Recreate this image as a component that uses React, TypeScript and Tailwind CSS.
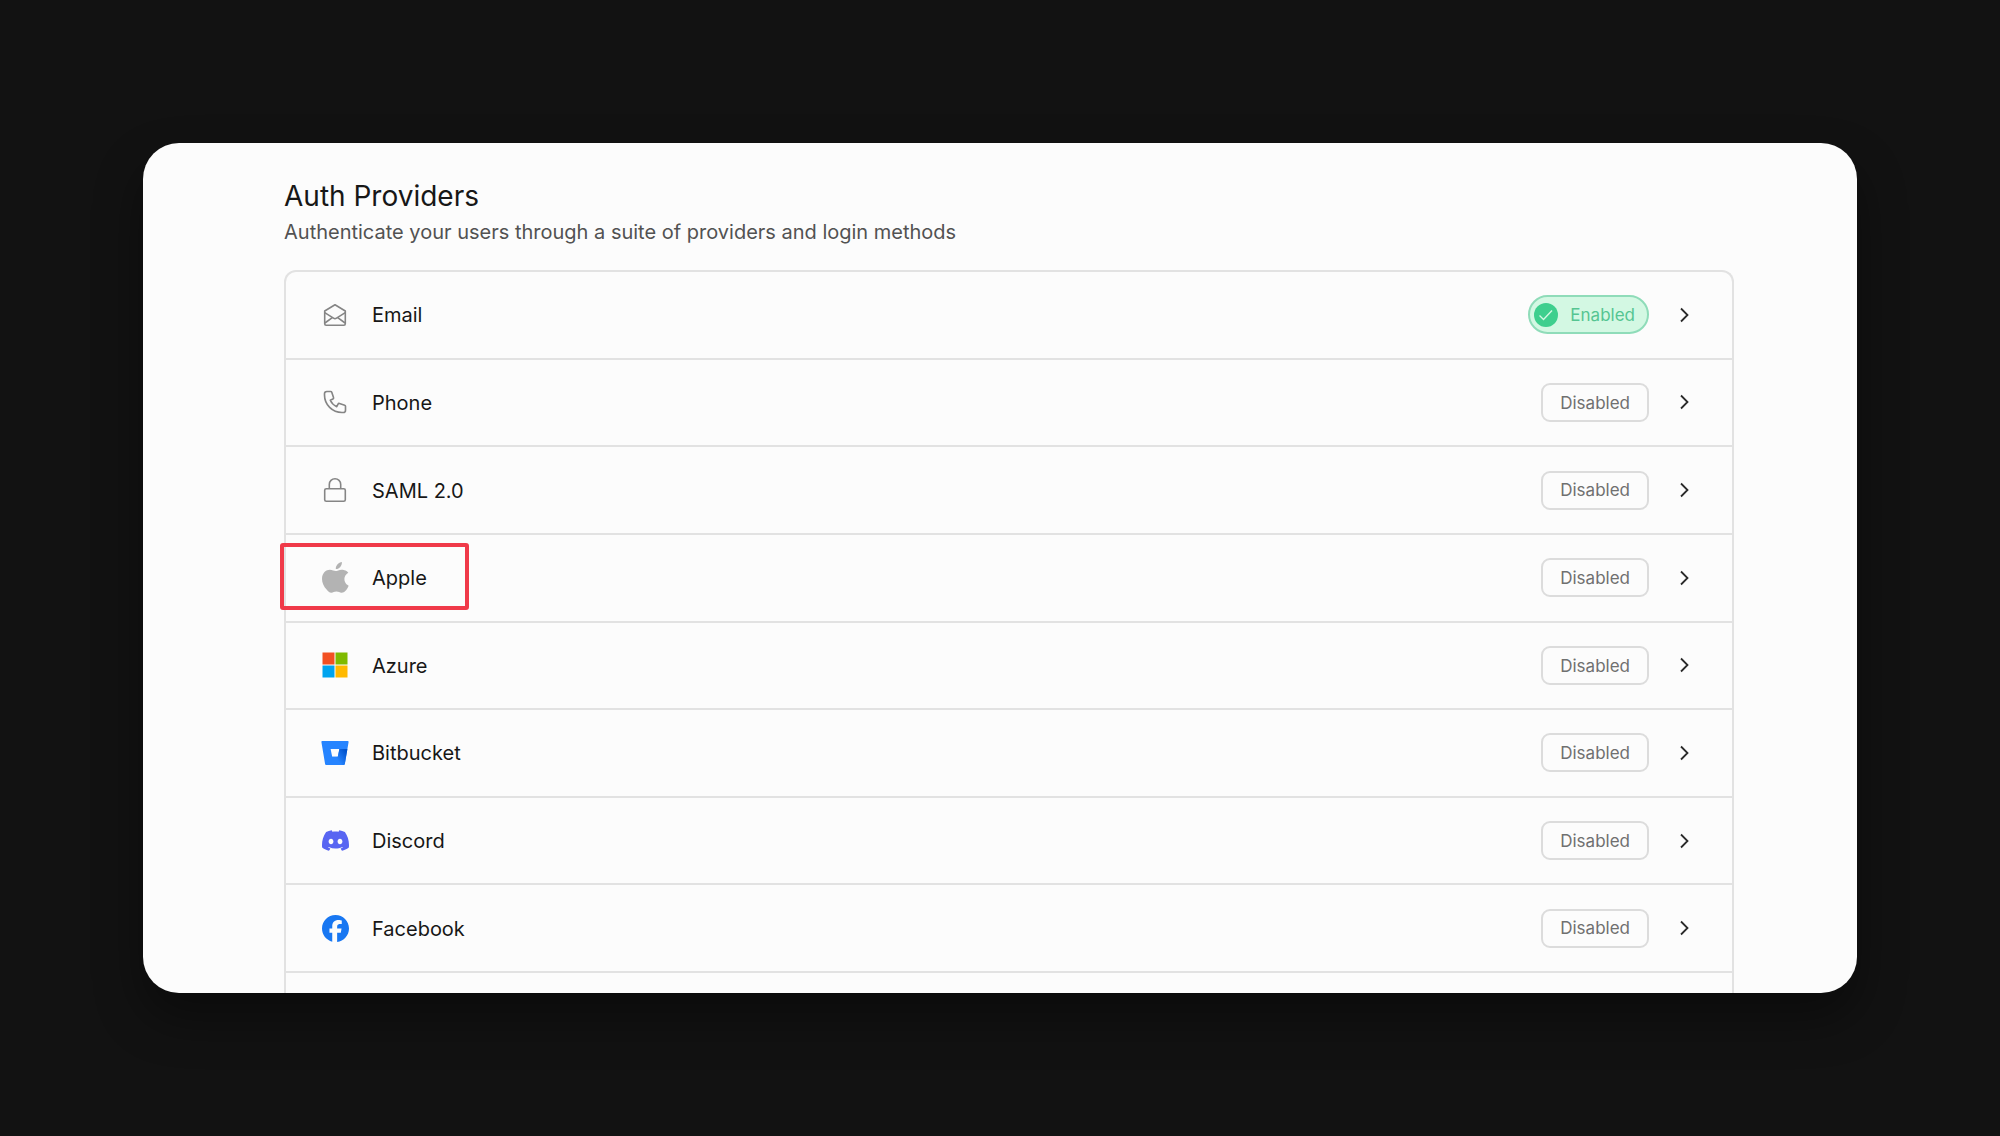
import type { ReactNode } from 'react';
import { SiDiscord, SiFacebook } from 'react-icons/si';

type Provider = {
  name: string;
  icon: ReactNode;
  enabled?: boolean;
  highlighted?: boolean;
};

function EmailIcon() {
  return (
    <svg width="24" height="24" viewBox="0 0 24 24" fill="none" stroke="#858585" strokeWidth="1.6" strokeLinejoin="round">
      <path d="M1.7 8 12 1.8 22.3 8v12.8a1.4 1.4 0 0 1-1.4 1.4H3.1a1.4 1.4 0 0 1-1.4-1.4z" />
      <path d="m1.7 9.6 8.8 5.6a2.7 2.7 0 0 0 3 0l8.8-5.6" />
      <path d="m1.9 20 7.4-5.4M22.1 20l-7.4-5.4" />
    </svg>
  );
}

function PhoneIcon() {
  return (
    <svg width="28" height="28" viewBox="0 0 24 24" fill="none" stroke="#858585" strokeWidth="1.4" strokeLinejoin="round">
      <path d="M3 5a2 2 0 012-2h3.28a1 1 0 01.948.684l1.498 4.493a1 1 0 01-.502 1.21l-2.257 1.13a11.042 11.042 0 005.516 5.516l1.13-2.257a1 1 0 011.21-.502l4.493 1.498a1 1 0 01.684.949V19a2 2 0 01-2 2h-1C9.716 21 3 14.284 3 6V5z" />
    </svg>
  );
}

function LockIcon() {
  return (
    <svg width="24" height="26" viewBox="0 0 24 26" fill="none" stroke="#858585" strokeWidth="1.6">
      <rect x="1.7" y="11.7" width="20.6" height="12.6" rx="1.6" />
      <path d="M6.3 11.7V7.4a5.7 5.7 0 0 1 11.4 0v4.3" />
    </svg>
  );
}

function AppleIcon() {
  return (
    <svg width="27" height="31" viewBox="0 0 27 31" fill="#b3b3b3">
      <path d="M26.6 23.7c-.1.3-.7 2.2-2.3 4.2-1.3 1.6-2.7 2.8-4.8 2.8-2 0-2.7-1.1-5.1-1.1-2.3 0-3.1 1.1-5 1.1-1.9.1-3.4-1.4-4.8-3.2C1.8 24.6 0 20.5 0 16.9 0 11 4 7.8 7.9 7.8c2.3 0 4.2 1.3 5.7 1.3 1.4 0 3.5-1.4 6.1-1.4 1 0 4.4.1 6.6 3-.2.1-3.9 2.2-3.9 6.4 0 4.9 4.2 6.6 4.2 6.6z" />
      <path d="M19.9.1c.2 1.8-.5 3.5-1.6 4.8-1.1 1.3-2.8 2.2-4.5 2.1-.2-1.7.6-3.4 1.6-4.6C16.5 1.100 18.500.2 19.900.1z" />
    </svg>
  );
}

function AzureIcon() {
  return (
    <svg width="26" height="26" viewBox="0 0 26 26">
      <path fill="#f25022" d="M.5.5h12v12H.5z" />
      <path fill="#7fba00" d="M13.5.5h12v12h-12z" />
      <path fill="#00a4ef" d="M.5 13.5h12v12H.5z" />
      <path fill="#ffb900" d="M13.5 13.5h12v12h-12z" />
    </svg>
  );
}

function BitbucketIcon() {
  return (
    <svg width="28" height="24" viewBox="0 0 28 24">
      <defs>
        <linearGradient id="bucket" x1="26" y1="9" x2="14" y2="18" gradientUnits="userSpaceOnUse">
          <stop offset="0.1" stopColor="#0052cc" />
          <stop offset="0.9" stopColor="#2684ff" />
        </linearGradient>
      </defs>
      <path fill="#2684ff" d="M1.3 0a.9.9 0 0 0-.9 1l3.7 21.9a1.2 1.2 0 0 0 1.2 1h17.600a.9.9 0 0 0 .9-.8L27.6 1a.9.9 0 0 0-.9-1zM16.800 15.800h-5.600L9.600 8h8.800z" />
      <path fill="url(#bucket)" d="M26.4 8h-8l-1.6 7.8h-5.6l-6.6 7.8a1.2 1.2 0 0 0 .7.3h17.6a.9.9 0 0 0 .9-.8z" />
    </svg>
  );
}

const providers: Provider[] = [
  { name: 'Email', icon: <EmailIcon />, enabled: true },
  { name: 'Phone', icon: <PhoneIcon /> },
  { name: 'SAML 2.0', icon: <LockIcon /> },
  { name: 'Apple', icon: <AppleIcon />, highlighted: true },
  { name: 'Azure', icon: <AzureIcon /> },
  { name: 'Bitbucket', icon: <BitbucketIcon /> },
  { name: 'Discord', icon: <SiDiscord size={27} color="#5865f2" /> },
  { name: 'Facebook', icon: <SiFacebook size={27} color="#1877f2" /> },
];

function StatusBadge({ enabled }: { enabled?: boolean }) {
  if (enabled) {
    return (
      <span className="flex h-[39px] items-center gap-3 rounded-full border-2 border-[#8fdcb9] bg-[#d3f8e3] pr-3 pl-1 text-[#55c592]">
        <svg width="24" height="24" viewBox="0 0 24 24" fill="none">
          <circle cx="12" cy="12" r="12" fill="#3ecf8e" />
          <path d="m5.5 12.5 4 4 8.500-9" stroke="#d3f8e3" strokeWidth="1.4" />
        </svg>
        <span className="pt-px">Enabled</span>
      </span>
    );
  }

  return (
    <span className="flex h-[39px] items-center rounded-[9px] border-2 border-[#dcdcdc] px-[17px] pt-0.5 text-[#707070]">
      Disabled
    </span>
  );
}

function ProviderRow({ name, icon, enabled, highlighted }: Provider) {
  return (
    <li className="relative border-b-2 border-[#e2e2e2]">
      <button type="button" className="flex h-full w-full items-center pr-[39px] pl-[35px] text-left">
        <span className="flex w-7 shrink-0 justify-center">{icon}</span>
        <span className="ml-[23px] flex-1 pt-px text-xl text-[#171717]">{name}</span>
        <span className="text-[17px]">
          <StatusBadge enabled={enabled} />
        </span>
        <svg className="ml-7" width="16" height="16" viewBox="0 0 16 16" fill="none" stroke="#2a2a2a" strokeWidth="1.8">
          <path d="m4 1.5 6.5 6.5L4 14.5" />
        </svg>
      </button>
      {highlighted && (
        <div className="pointer-events-none absolute top-2 -left-[6px] h-[67px] w-[189px] rounded-[3px] border-4 border-[#f03a49]" />
      )}
    </li>
  );
}

export default function App() {
  return (
    <div className="flex min-h-screen flex-col bg-[#121212] p-[143px] font-['Inter',sans-serif]">
      <main className="flex flex-1 flex-col overflow-hidden rounded-[36px] bg-[#fcfcfc] pt-[33px] pr-[123px] pl-[141px] shadow-[0_24px_48px_rgba(0,0,0,0.4)]">
        <h1 className="text-[28px] leading-10 text-[#171717]">Auth Providers</h1>
        <p className="text-xl leading-8 text-[#525252]">
          Authenticate your users through a suite of providers and login methods
        </p>
        <div className="mt-[22px] flex-1 rounded-t-xl border-2 border-b-0 border-[#e2e2e2]">
          <ul className="grid min-h-[701px] auto-rows-fr">
            {providers.map((provider) => (
              <ProviderRow key={provider.name} {...provider} />
            ))}
          </ul>
        </div>
      </main>
    </div>
  );
}
